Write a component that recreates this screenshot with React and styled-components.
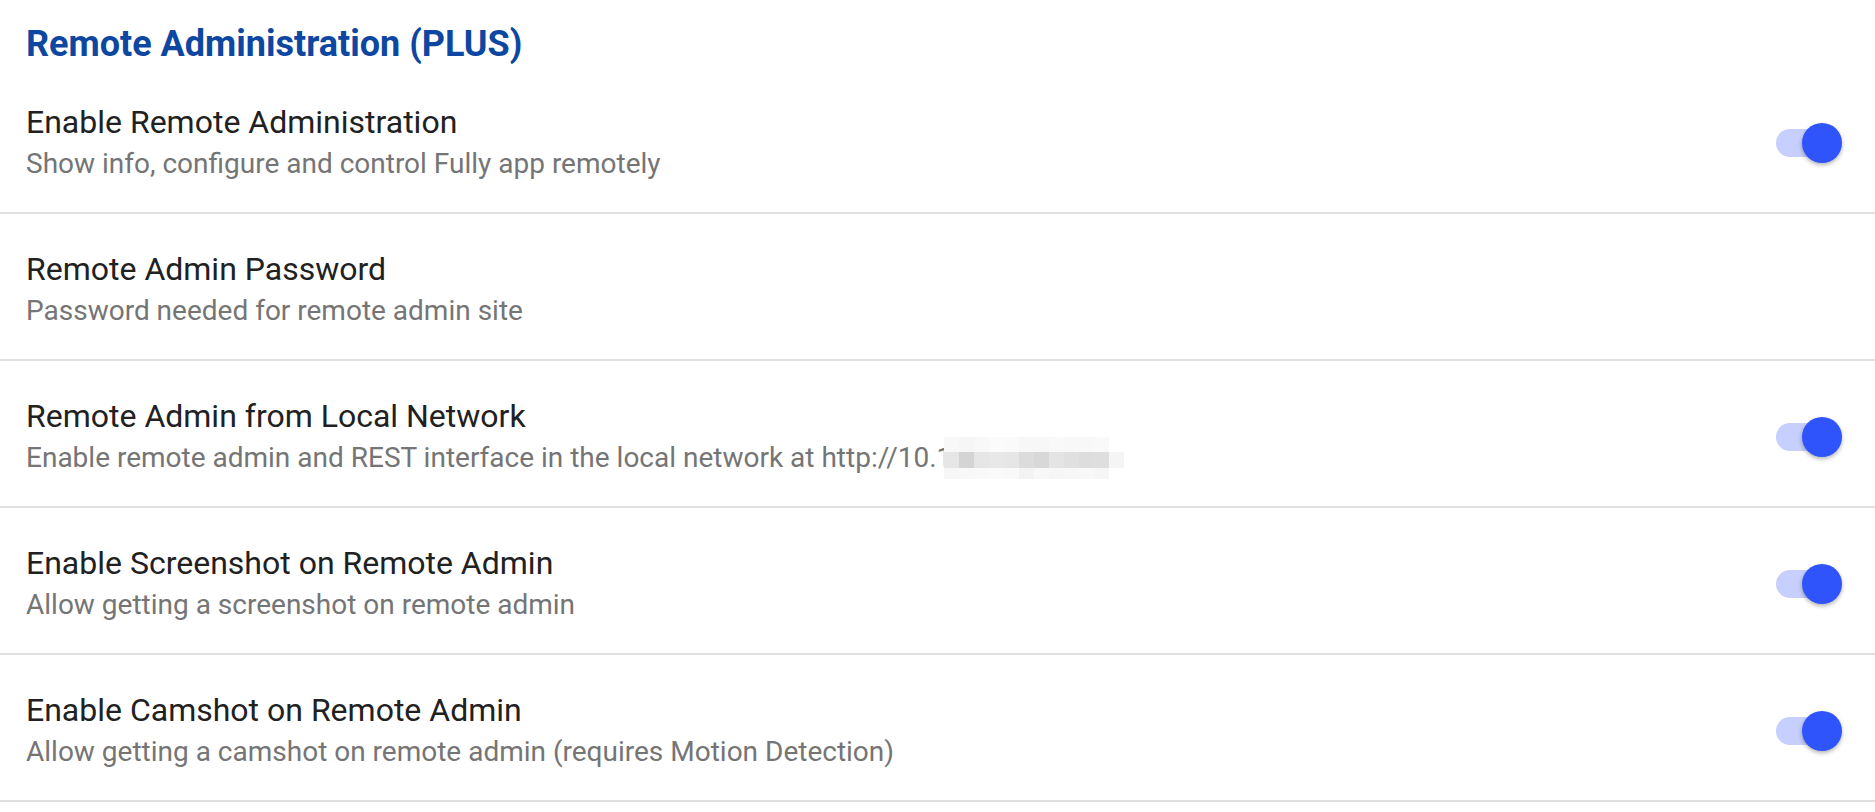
import React from 'react';
import styled, { createGlobalStyle } from 'styled-components';

const GlobalStyle = createGlobalStyle`
  html, body {
    margin: 0;
    padding: 0;
    background: #ffffff;
  }
  body {
    font-family: Roboto, "Noto Sans", "Liberation Sans", sans-serif;
  }
`;

const Page = styled.div`
  width: 100%;
  background: #ffffff;
`;

const SectionHeader = styled.h2`
  margin: 0;
  padding: 24px 26px 3px;
  font-size: 36px;
  line-height: 40px;
  font-weight: 700;
  color: #0d47a1;
`;

const Row = styled.div`
  display: flex;
  align-items: center;
  justify-content: space-between;
  padding: 34px 33px 27px 26px;
  border-bottom: 2px solid #e0e0e0;
`;

const TextBlock = styled.div`
  display: flex;
  flex-direction: column;
`;

const Title = styled.div`
  font-size: 32px;
  line-height: 42px;
  color: #212121;
`;

const Summary = styled.div`
  font-size: 28px;
  line-height: 42px;
  color: #757575;
  white-space: nowrap;
`;

const SwitchBox = styled.div`
  position: relative;
  width: 66px;
  height: 40px;
  flex-shrink: 0;
`;

const Track = styled.div`
  position: absolute;
  left: 0;
  top: 6px;
  width: 60px;
  height: 28px;
  border-radius: 14px;
  background: #c6cffd;
`;

const Thumb = styled.div`
  position: absolute;
  right: 0;
  top: 0;
  width: 40px;
  height: 40px;
  border-radius: 50%;
  background: #2f54fb;
  box-shadow: 0 2px 4px rgba(0, 0, 0, 0.3);
`;

const Mosaic = styled.span`
  display: inline-grid;
  grid-template-columns: repeat(12, 15px);
  grid-template-rows: 15px 16px 11px;
  vertical-align: top;
  margin-left: -8px;
`;

const Cell = styled.span`
  background: ${(p) => p.$c};
`;

const mosaicRows = [
  ['#f8f8f8', '#f6f6f6', '#f8f8f8', '#fbfbfb', '#fafafa', '#f7f7f7', '#f7f7f7', '#f9f9f9', '#f8f8f8', '#f8f8f8', '#f9f9f9', '#ffffff'],
  ['#e6e6e6', '#d4d4d4', '#e6e6e6', '#e8e8e8', '#e6e6e6', '#dcdcdc', '#d8d8d8', '#e4e4e4', '#e0e0e0', '#dddddd', '#dedede', '#f5f5f5'],
  ['#f7f7f7', '#f8f8f8', '#f9f9f9', '#fafafa', '#f9f9f9', '#f3f3f3', '#f8f8f8', '#f6f6f6', '#f7f7f7', '#f8f8f8', '#f6f6f6', '#ffffff'],
];

const BlurredAddress = () => (
  <Mosaic>
    {mosaicRows.flat().map((c, i) => (
      <Cell key={i} $c={c} />
    ))}
  </Mosaic>
);

const Toggle = () => (
  <SwitchBox>
    <Track />
    <Thumb />
  </SwitchBox>
);

const settings = [
  {
    title: 'Enable Remote Administration',
    summary: 'Show info, configure and control Fully app remotely',
    toggle: true,
  },
  {
    title: 'Remote Admin Password',
    summary: 'Password needed for remote admin site',
    toggle: false,
  },
  {
    title: 'Remote Admin from Local Network',
    summary: 'Enable remote admin and REST interface in the local network at http://10.1',
    toggle: true,
    blurred: true,
  },
  {
    title: 'Enable Screenshot on Remote Admin',
    summary: 'Allow getting a screenshot on remote admin',
    toggle: true,
  },
  {
    title: 'Enable Camshot on Remote Admin',
    summary: 'Allow getting a camshot on remote admin (requires Motion Detection)',
    toggle: true,
  },
];

const App = () => (
  <Page>
    <GlobalStyle />
    <SectionHeader>Remote Administration (PLUS)</SectionHeader>
    {settings.map((s) => (
      <Row key={s.title}>
        <TextBlock>
          <Title>{s.title}</Title>
          <Summary>
            {s.summary}
            {s.blurred && <BlurredAddress />}
          </Summary>
        </TextBlock>
        {s.toggle && <Toggle />}
      </Row>
    ))}
  </Page>
);

export default App;
